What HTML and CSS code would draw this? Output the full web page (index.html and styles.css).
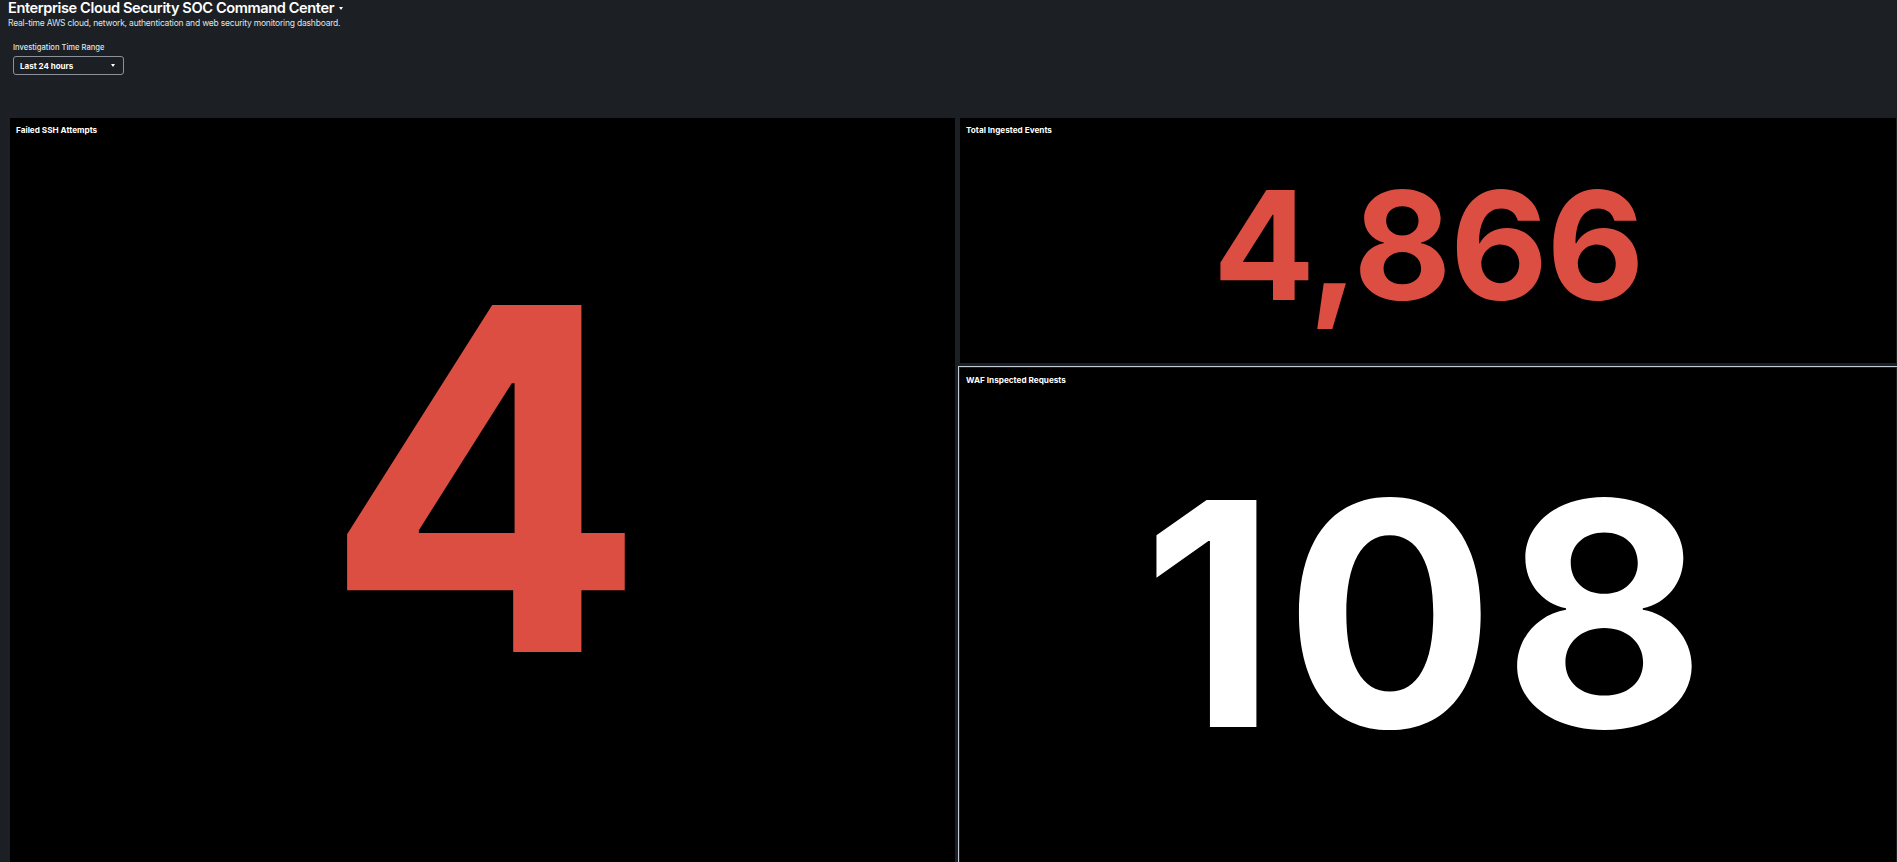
FILE: index.html
```html
<!DOCTYPE html>
<html lang="en">
<head>
  <meta charset="UTF-8" />
  <meta name="viewport" content="width=device-width, initial-scale=1.0"/>
  <title>Enterprise Cloud Security SOC Command Center</title>
  <link rel="stylesheet" href="styles.css">
</head>
<body>

  <header class="dash-header">
    <h1 class="dash-title">Enterprise Cloud Security SOC Command Center <span class="caret"></span></h1>
    <p class="dash-desc">Real-time AWS cloud, network, authentication and web security monitoring dashboard.</p>
  </header>

  <div class="inputs">
    <label class="input-label">Investigation Time Range</label>
    <button class="dropdown">
      <span>Last 24 hours</span>
      <span class="caret"></span>
    </button>
  </div>

  <main class="layout">
    <section class="panel panel-ssh">
      <h2 class="panel-title">Failed SSH Attempts</h2>
      <div class="value value-red value-ssh">4</div>
    </section>

    <section class="panel panel-events">
      <h2 class="panel-title">Total Ingested Events</h2>
      <div class="value value-red value-events">4,866</div>
    </section>

    <section class="panel panel-waf">
      <h2 class="panel-title">WAF Inspected Requests</h2>
      <div class="value value-white value-waf">108</div>
    </section>
  </main>

</body>
</html>
```

FILE: styles.css
```css
* {
  margin: 0;
  padding: 0;
  box-sizing: border-box;
}

html, body {
  height: 100%;
  overflow: hidden;
}

body {
  font-family: Inter, "Noto Sans", sans-serif;
  background: #1c1f24;
  color: #ffffff;
}

.dash-header {
  padding: 0 8px;
}

.dash-title {
  font-size: 14.6px;
  font-weight: 600;
  line-height: 16px;
  letter-spacing: -0.4px;
  display: flex;
  align-items: center;
  gap: 5px;
}

.caret {
  display: inline-block;
  width: 0;
  height: 0;
  border-left: 2.5px solid transparent;
  border-right: 2.5px solid transparent;
  border-top: 3px solid #ffffff;
}

.dash-desc {
  font-size: 8.5px;
  line-height: 12px;
  letter-spacing: -0.2px;
  color: #dfe3e8;
  margin-top: 1px;
}

.inputs {
  padding: 13px 13px 0;
  display: flex;
  flex-direction: column;
  align-items: flex-start;
}

.input-label {
  font-size: 7.6px;
  font-weight: 500;
  color: #dfe3e8;
  line-height: 11px;
  margin-bottom: 3px;
}

.dropdown {
  width: 111px;
  height: 19px;
  background: #1c1f24;
  border: 1px solid #8b929b;
  border-radius: 3px;
  color: #ffffff;
  font-family: inherit;
  font-size: 8px;
  font-weight: 700;
  display: flex;
  align-items: center;
  justify-content: space-between;
  padding: 0 8px 0 6px;
}

.layout {
  margin-top: 43px;
  padding: 0 1px 0 10px;
  display: grid;
  grid-template-columns: 945fr 936fr;
  grid-template-rows: 245px 494px;
  column-gap: 5px;
  row-gap: 5px;
}

.panel {
  background: #000000;
  display: grid;
  overflow: hidden;
}

.panel > * {
  grid-area: 1 / 1;
}

.panel-ssh {
  grid-row: 1 / 3;
}

.panel-waf {
  outline: 1px solid #c3cbd4;
  outline-offset: 1px;
}

.panel-title {
  align-self: start;
  font-size: 8.2px;
  font-weight: 700;
  line-height: 11px;
  padding: 7px 6px;
}

.value {
  place-self: center;
  font-weight: 700;
  line-height: 1;
  letter-spacing: -0.01em;
}

.value-red {
  color: #dc4e41;
}

.value-white {
  color: #ffffff;
}

.value-ssh {
  font-size: 477px;
  margin-bottom: 24px;
}

.value-events {
  font-size: 151px;
  margin-top: 9px;
}

.value-waf {
  font-size: 312px;
  letter-spacing: 0.025em;
  margin-bottom: 2px;
}
```
